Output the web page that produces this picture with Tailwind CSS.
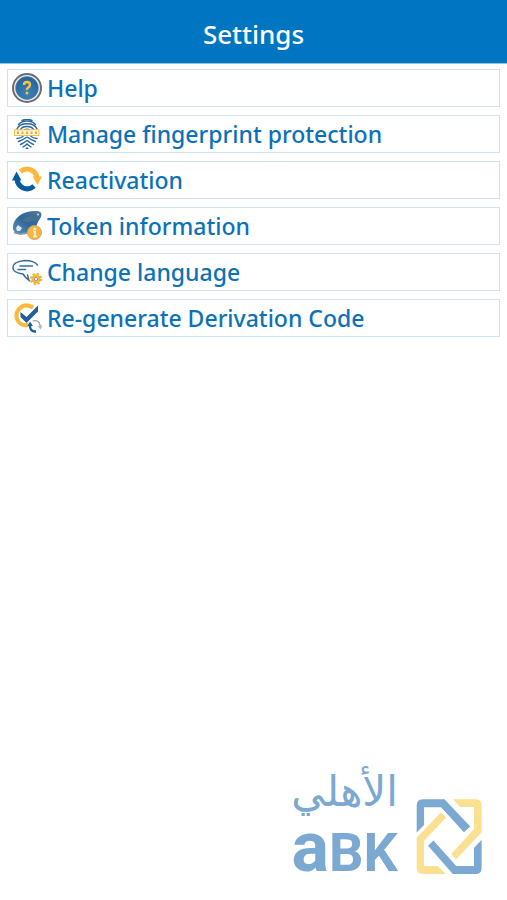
<!DOCTYPE html>
<html lang="en">
<head>
<meta charset="utf-8">
<meta name="viewport" content="width=device-width, initial-scale=1">
<title>Settings</title>
<script src="https://cdn.jsdelivr.net/npm/@tailwindcss/browser@4"></script>
</head>
<body class="flex min-h-screen flex-col bg-white font-['Noto_Sans','Open_Sans',sans-serif] font-medium">
<header class="flex h-16 items-center justify-center border-b border-[#8fc4e6] bg-[#0075c1] pt-1">
  <h1 class="text-[26px] leading-8 text-white">Settings</h1>
</header>
<main class="flex flex-1 flex-col justify-between">
  <nav aria-label="Settings" class="px-[7px] pt-[5px]">
    <ul class="flex flex-col gap-2 text-[23px] leading-8 text-[#0b72b9]">
      <li><button class="flex h-[38px] w-full items-center gap-[5px] border border-[#cfe3ee] pl-1 text-left">
        <svg class="size-[30px] shrink-0" viewBox="0 0 30 30" fill="none" aria-hidden="true">
          <defs><radialGradient id="orb" cx=".5" cy=".75" r=".7"><stop stop-color="#3d82bb"/><stop offset="1" stop-color="#27649b"/></radialGradient></defs>
          <circle cx="15" cy="15" r="14" fill="#e9edef" stroke="#6c6d70" stroke-width="2"/>
          <circle cx="15" cy="15" r="11.4" fill="url(#orb)" stroke="#4a7ba5" stroke-width=".6"/>
          <path d="M12 12q0-3 3-3t3 3q0 1.500-1.700 2.500T15 17" stroke="#f9c13e" stroke-width="2.400"/><circle cx="15" cy="20" r="1.500" fill="#f9c13e"/>
        </svg><span>Help</span></button></li>
      <li><button class="flex h-[38px] w-full items-center gap-[5px] border border-[#cfe3ee] pl-1 text-left">
        <svg class="size-[30px] shrink-0" viewBox="0 0 30 30" fill="none" stroke="#2868a4" stroke-width="1.400" stroke-linecap="round" aria-hidden="true">
          <path d="M10 1.500Q15-1 20 1.500M6.500 5.500Q10 2 15 2T23.500 5.500M5 10Q7 4.800 15 4.800T25 10M8.500 10.500Q10 7.500 15 7.500T21.500 10.500M12.500 11Q15 9.500 17.500 11"/>
          <path d="M5 19.500Q9 19 11 17.500M6.500 22.500Q11 21 14 18.500Q15 17.700 16 18.500Q19 21 23.500 22.500M19 17.500Q21 19 25 19.500M8.500 25.500Q12 24 14.500 21.700Q15 21.300 15.500 21.700Q18 24 21.500 25.500M11 28Q13.500 26.500 15 25Q16.500 26.500 19 28M14 30 15 29 16 30"/>
          <rect x="2.500" y="10.800" width="24.500" height="5.700" fill="#fff6dc" stroke="#f7bd49" stroke-width="1"/>
          <path d="M5 13.700h20" stroke="#eaae39" stroke-width="2.500" stroke-dasharray="2 2.500" stroke-linecap="butt"/>
        </svg><span>Manage fingerprint protection</span></button></li>
      <li><button class="flex h-[38px] w-full items-center gap-[5px] border border-[#cfe3ee] pl-1 text-left">
        <svg class="size-[30px] shrink-0" viewBox="0 0 30 30" fill="none" aria-hidden="true">
          <path d="M8.500 6.500Q14 2 20 5.500Q24.500 8 25 13" stroke="#fbb83a" stroke-width="5"/><path d="M20.500 11.500H30L25.500 20Z" fill="#fbb83a"/>
          <path d="M5 14Q5.500 20 11 23Q17 25.500 22 21" stroke="#075ba3" stroke-width="5"/><path d="M4.500 6.500 9.500 15.500H0Z" fill="#075ba3"/>
        </svg><span>Reactivation</span></button></li>
      <li><button class="flex h-[38px] w-full items-center gap-[5px] border border-[#cfe3ee] pl-1 text-left">
        <svg class="size-[30px] shrink-0" viewBox="0 0 30 30" fill="none" aria-hidden="true">
          <defs><linearGradient id="fob" x1="0" y1="1" x2="1" y2="0"><stop stop-color="#6495bd"/><stop offset=".5" stop-color="#2c6799"/><stop offset="1" stop-color="#547896"/></linearGradient></defs>
          <path d="M1 18Q0 11 7 5Q13 0 24 0Q31 0 29 6Q26 10 24 16Q21 22 12 23Q3 25 1 18Z" fill="url(#fob)"/>
          <path d="M2 21.500q7 3 16-.500" stroke="#8998a4" stroke-width="1.800"/>
          <path d="m11 9 8-3 3 2-7 3Z" stroke="#6d7077" stroke-width=".7" fill="#417297"/><path d="m4 17 2-3 4 3-2 3H5Z" fill="#dce8f0"/><circle cx="26" cy="3.500" r="1" fill="#d0e1ed"/>
          <circle cx="22.500" cy="21.500" r="7" fill="#fab642" stroke="#c9a371"/>
          <circle cx="22.500" cy="18" r="1.300" fill="#fff4d6"/><path d="M21 20.500h2v5m-2 0h4" stroke="#fff4d6" stroke-width="1.500"/>
        </svg><span>Token information</span></button></li>
      <li><button class="flex h-[38px] w-full items-center gap-[5px] border border-[#cfe3ee] pl-1 text-left">
        <svg class="size-[30px] shrink-0" viewBox="0 0 30 30" fill="none" stroke="#3a6f9f" stroke-linecap="round" aria-hidden="true">
          <path d="M25.500 8Q22 3.500 13 3.500Q1 4.500 .8 10.500Q1 16 11 17Q13.500 21 17 23.500L15.500 18" stroke-width="1.500"/>
          <path d="M8 9h12.500M6 12.500h7.500" stroke-width="1.500"/>
          <circle cx="24" cy="22" r="5" stroke="#f5b537" stroke-width="2.400" stroke-dasharray="2.200 1.727" stroke-linecap="butt"/>
          <circle cx="24" cy="22" r="3.600" fill="#f8c759" stroke="#f5b537" stroke-width="2"/><circle cx="24" cy="22" r="1.700" fill="#fff" stroke="#9b9f8f"/>
        </svg><span>Change language</span></button></li>
      <li><button class="flex h-[38px] w-full items-center gap-[5px] border border-[#cfe3ee] pl-1 text-left">
        <svg class="size-[30px] shrink-0" viewBox="0 0 30 30" fill="none" aria-hidden="true">
          <path d="M21 4.500Q13 0 8 5Q2 11 6 18Q10 24 17 21.500" stroke="#fab83d" stroke-width="4"/>
          <path d="m8.500 9 6 5L26 2.500V8.500L14.500 20 8.500 14Z" fill="#215f9a"/>
          <circle cx="23" cy="23" r="6.500" fill="#fff"/>
          <path d="M24 28.500Q18 29 17.800 22" stroke="#175f9d" stroke-width="2.400"/><path d="m18 18.500 3 4.500h-5.500Z" fill="#175f9d"/>
          <path d="M20.500 18Q27 16 28.300 23" stroke="#98a5ae" stroke-width="1.300"/><path d="m25.500 23 5-.500-2 4Z" fill="#aebac1"/>
        </svg><span>Re-generate Derivation Code</span></button></li>
    </ul>
  </nav>
  <footer class="flex items-end justify-end gap-[18px] pr-6 pb-[25px] text-[#7ba9d1]">
    <div class="flex flex-col items-center whitespace-nowrap">
      <p lang="ar" dir="rtl" class="font-['DejaVu_Sans',sans-serif] text-[42px] leading-[50px] font-normal">الأهلي</p>
      <p class="-mb-2 font-[Roboto,sans-serif] text-[54px] leading-[60px] font-bold"><span class="text-[70px] leading-[60px]">a</span>BK</p>
    </div>
    <svg class="h-[77px] w-[67px]" viewBox="410 115 200 230" aria-hidden="true">
      <g fill="#7ba9d1">
        <path d="M412 218V137Q412 119 430 119H495L572 200 553 217 485 143H434V196Z"/>
        <path d="M462 242 530 318H583V264L606 240V324Q606 342 588 342H520L446 258Z"/>
      </g>
      <g fill="#fbe092">
        <path d="M520 119H588Q606 119 606 137V217L530 298 515 283 583 208V142H543Z"/>
        <path d="M484 158 500 173 434 243V318H475L499 342H430Q412 342 412 324V234Z"/>
      </g>
    </svg>
  </footer>
</main>
</body>
</html>
